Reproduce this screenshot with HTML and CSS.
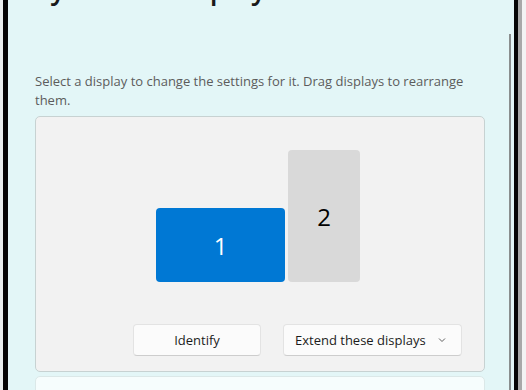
FILE: index.html
```html
<!DOCTYPE html>
<html>
  <head>
    <meta charset="utf-8" />
    <title>Display</title>
    <link rel="stylesheet" href="styles.css">
  </head>
  <body>
    <div class="screen">
      <div class="edgeLeft"></div>

      <div class="window">
        <div class="content">
          <h1 class="title">System <span class="sep">&rsaquo;</span> Display</h1>

          <p class="intro">
            Select a display to change the settings for it. Drag displays to rearrange them.
          </p>

          <div class="arrangeCard">
            <div class="monitors">
              <div class="monitor primary">1</div>
              <div class="monitor secondary">2</div>
            </div>

            <div class="actions">
              <button class="btn identify">Identify</button>
              <button class="btn dropdown">
                Extend these displays
                <svg width="10" height="10" viewBox="0 0 10 10">
                  <path d="M2 3.5 L5 6.5 L8 3.5" fill="none" stroke="#5f5f5f" stroke-width="1" />
                </svg>
              </button>
            </div>
          </div>

          <div class="nextCard"></div>
        </div>

        <div class="scrollbar"></div>
      </div>

      <div class="edgeRight"></div>
    </div>
  </body>
</html>
```

FILE: styles.css
```css
html {
  font-family: "Open Sans", "Noto Sans", sans-serif;
  font-size: 14px;
}

body {
  margin: 0;
  background: #f3f3f3;
  overflow: hidden;
}

.screen {
  display: flex;
  height: 390px;
}

.edgeLeft {
  width: 3px;
  background: #e9eeee;
}

.window {
  width: 506px;
  display: flex;
  background: #e3f6f7;
  border-left: 5px solid #050505;
  border-right: 4px solid #050505;
  overflow: hidden;
}

.edgeRight {
  width: 4px;
  background: #a8a8a8;
}

.content {
  flex: 1;
  padding-left: 27px;
  padding-right: 24px;
}

.scrollbar {
  width: 2px;
  margin-top: 34px;
  margin-right: 3px;
  background: #8a8e8e;
}

.title {
  margin: -30px 0 0 0;
  font-size: 28px;
  line-height: 36px;
  font-weight: 600;
  color: #1a1a1a;
}

.sep {
  font-weight: 400;
  margin: 0 6px;
}

.intro {
  margin: 66px 0 0 0;
  font-size: 13px;
  line-height: 19px;
  color: #5c5c5c;
}

.arrangeCard {
  margin-top: 6px;
  height: 256px;
  box-sizing: border-box;
  background: #f2f2f2;
  border: 1px solid #c7d2d2;
  border-radius: 5px;
  padding-top: 33px;
}

.monitors {
  display: flex;
  align-items: flex-end;
  justify-content: center;
  gap: 3px;
  height: 132px;
  padding-right: 4px;
}

.monitor {
  display: flex;
  align-items: center;
  justify-content: center;
  border-radius: 4px;
  font-size: 24px;
}

.primary {
  width: 129px;
  height: 74px;
  background: #0078d4;
  color: #ffffff;
}

.secondary {
  width: 72px;
  height: 132px;
  background: #d9d9d9;
  color: #000000;
}

.actions {
  display: flex;
  justify-content: flex-end;
  gap: 22px;
  margin-top: 42px;
  padding-right: 22px;
}

.btn {
  height: 32px;
  box-sizing: border-box;
  background: #fbfbfb;
  border: 1px solid #e3e3e3;
  border-bottom-color: #cdcdcd;
  border-radius: 4px;
  font-family: inherit;
  font-size: 13px;
  color: #1b1b1b;
}

.identify {
  width: 128px;
}

.dropdown {
  width: 179px;
  display: flex;
  align-items: center;
  justify-content: space-between;
  padding: 0 14px 0 11px;
}

.nextCard {
  margin-top: 4px;
  height: 30px;
  background: #f6fdfd;
  border: 1px solid #dbe8e8;
  border-radius: 5px;
}
```
